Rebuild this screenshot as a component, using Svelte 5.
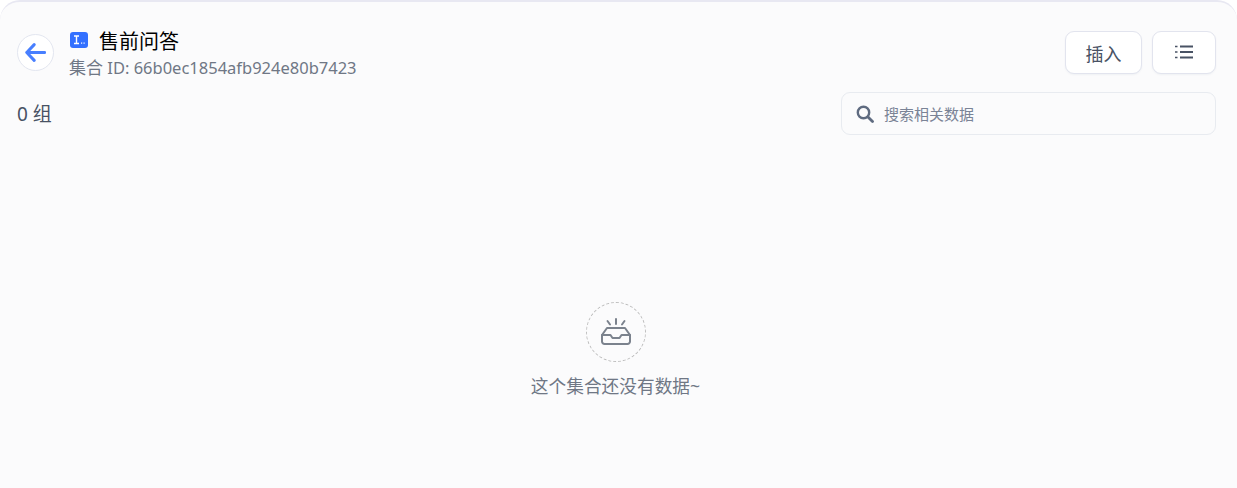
<script>
  const collectionId = '66b0ec1854afb924e80b7423';
</script>

<div class="shell">
  <header class="top">
    <button class="back" aria-label="返回">
      <svg viewBox="0 0 24 24" fill="none" stroke="#487fff" stroke-width="3.400" stroke-linecap="round" stroke-linejoin="round">
        <path d="M22.500 12H2M10.500 3L2 12l8.500 9"/>
      </svg>
    </button>
    <div class="info">
      <div class="name-row">
        <svg class="type-icon" viewBox="0 0 18 16">
          <rect width="18" height="16" rx="3" fill="#3370ff"/>
          <path d="M4 4h5M6.500 4v7.500M4 11.500h5" stroke="#fff" stroke-width="1.400" fill="none"/>
          <rect x="11" y="10.500" width="1.200" height="1.200" fill="#fff"/>
          <rect x="13.500" y="10.500" width="1.200" height="1.200" fill="#fff"/>
        </svg>
        <span class="name">售前问答</span>
      </div>
      <div class="sub"><span class="cjk">集合</span> ID: {collectionId}</div>
    </div>
    <div class="actions">
      <button class="btn insert">插入</button>
      <button class="btn menu" aria-label="菜单">
        <svg viewBox="0 0 18 14" fill="none" stroke="#485264">
          <path d="M5 1.500h13M5 7h13M5 12.500h13" stroke-width="2"/>
          <path d="M0 1.500h2.500M0 7h2.500M0 12.500h2.500" stroke-width="1.500"/>
        </svg>
      </button>
    </div>
  </header>

  <div class="toolbar">
    <span class="count">0 组</span>
    <label class="search">
      <svg viewBox="0 0 18 18" fill="none" stroke="#5f6b80" stroke-linecap="round">
        <circle cx="7.500" cy="7.500" r="5.700" stroke-width="2.400"/>
        <path d="M12 12l4.500 4.500" stroke-width="2.800"/>
      </svg>
      <input placeholder="搜索相关数据" />
    </label>
  </div>

  <div class="empty">
    <div class="empty-icon">
      <svg viewBox="0 0 32 28" fill="none" stroke="#7b828d" stroke-width="2" stroke-linecap="round" stroke-linejoin="round">
        <path d="M16 1v5M7.500 3l2.500 3.500M24.500 3L22 6.500"/>
        <path d="M7 10h18l5 7v6.500a2.500 2.500 0 0 1-2.500 2.500h-23A2.500 2.500 0 0 1 2 23.500V17z"/>
        <path d="M2 17h8.500l2 3h7l2-3H30"/>
      </svg>
    </div>
    <p>这个集合还没有数据~</p>
  </div>
</div>

<style>
  :global(body) {
    background: #fff;
    font-family: "Noto Sans", "Noto Sans CJK SC", sans-serif;
  }

  .shell {
    box-sizing: border-box;
    height: 488px;
    background: #fbfbfc;
    border-top: 2px solid #e8e8f2;
    border-radius: 20px 20px 0 0;
    padding: 29px 21px 0 17px;
    display: flex;
    flex-direction: column;
  }

  .top {
    display: flex;
    align-items: flex-start;
    height: 61px;
  }

  .back {
    width: 37px;
    height: 37px;
    margin-top: 3px;
    padding: 7px;
    border: 1px solid #e3e6f0;
    border-radius: 50%;
    background: #fff;
    display: flex;
    box-sizing: border-box;
  }

  .back svg {
    width: 100%;
    height: 100%;
  }

  .info {
    margin-left: 15px;
  }

  .name-row {
    display: flex;
    align-items: center;
    height: 20px;
  }

  .type-icon {
    width: 18px;
    height: 16px;
    margin: -3px 0 0 1px;
  }

  .name {
    margin: 1px 0 0 11px;
    font-size: 20px;
    line-height: 20px;
    color: #000;
  }

  .sub {
    margin-top: 6px;
    font-size: 16.500px;
    line-height: 22px;
    color: #6f7785;
  }

  .cjk {
    font-size: 17px;
  }

  .actions {
    margin-left: auto;
    display: flex;
    gap: 10px;
  }

  .btn {
    box-sizing: border-box;
    height: 43px;
    border: 1px solid #e2e4ee;
    border-radius: 9px;
    background: #fff;
    box-shadow: 0 1px 2px rgba(19, 51, 107, 0.05);
    font: inherit;
    font-size: 18px;
    color: #485264;
    display: flex;
    align-items: center;
    justify-content: center;
    padding: 0;
  }

  .insert {
    width: 77px;
  }

  .menu {
    width: 64px;
  }

  .menu svg {
    width: 18px;
    height: 14px;
    margin-bottom: 1px;
  }

  .toolbar {
    display: flex;
    align-items: center;
    justify-content: space-between;
  }

  .count {
    margin-top: -2px;
    font-size: 19px;
    color: #485264;
  }

  .search {
    box-sizing: border-box;
    width: 375px;
    height: 43px;
    border: 1px solid #e8ebf0;
    border-radius: 9px;
    display: flex;
    align-items: center;
    padding-left: 14px;
    gap: 10px;
  }

  .search svg {
    width: 18px;
    height: 18px;
    flex: none;
  }

  .search input {
    flex: 1;
    min-width: 0;
    padding: 0;
    border: none;
    outline: none;
    background: transparent;
    font: inherit;
    font-size: 15px;
    color: #485264;
  }

  .search input::placeholder {
    color: #7a8396;
    opacity: 1;
  }

  .empty {
    display: flex;
    flex-direction: column;
    align-items: center;
    margin: 167px 2px 0 0;
  }

  .empty-icon {
    box-sizing: border-box;
    width: 60px;
    height: 60px;
    border: 1px dashed #bdbdbd;
    border-radius: 50%;
    display: flex;
    align-items: center;
    justify-content: center;
  }

  .empty-icon svg {
    width: 32px;
    height: 28px;
  }

  .empty p {
    margin: 10px 0 0;
    font-size: 17.700px;
    line-height: 28px;
    color: #6f7785;
  }
</style>
